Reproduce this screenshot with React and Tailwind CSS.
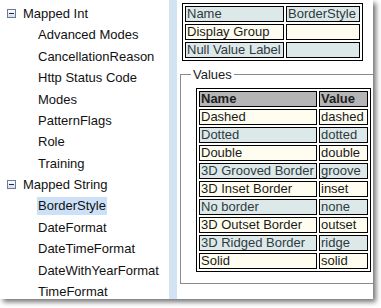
const tree = [
  {
    label: 'Mapped Int',
    items: ['Advanced Modes', 'CancellationReason', 'Http Status Code', 'Modes', 'PatternFlags', 'Role', 'Training'],
  },
  {
    label: 'Mapped String',
    items: ['BorderStyle', 'DateFormat', 'DateTimeFormat', 'DateWithYearFormat', 'TimeFormat'],
  },
];

const values = [
  ['Dashed', 'dashed'],
  ['Dotted', 'dotted'],
  ['Double', 'double'],
  ['3D Grooved Border', 'groove'],
  ['3D Inset Border', 'inset'],
  ['No border', 'none'],
  ['3D Outset Border', 'outset'],
  ['3D Ridged Border', 'ridge'],
  ['Solid', 'solid'],
];

const cream = 'bg-[#fffdf0] text-[#1a1a1a]';
const teal = 'bg-[#dce9e8] text-[#30393f]';

const MinusBox = () => (
  <svg width="9" height="9" viewBox="0 0 9 9" className="shrink-0">
    <defs>
      <linearGradient id="mb" x1="0" y1="0" x2="0" y2="1">
        <stop offset="0" stopColor="#ffffff" />
        <stop offset="1" stopColor="#d6dbe4" />
      </linearGradient>
    </defs>
    <rect x="0.5" y="0.5" width="8" height="8" fill="url(#mb)" stroke="#6a7a96" />
    <rect x="2" y="4" width="5" height="1" fill="#1c2c52" />
  </svg>
);

const Cell = ({ className = '', children }) => (
  <td className={`border border-black px-[1px] py-0 leading-[14px] whitespace-nowrap overflow-hidden ${className}`}>
    {children}
  </td>
);

export default function App() {
  return (
    <div
      className="w-[381px] h-[308px] bg-white overflow-hidden text-[13px]"
      style={{ fontFamily: '"Liberation Sans", Arial, sans-serif' }}
    >
      <div className="w-[373px] h-[299px] bg-white flex shadow-[3px_3px_5px_rgba(0,0,0,0.55)]">
        {/* Tree */}
        <div className="w-[169px] shrink-0 pt-[3px] text-[#111]">
          {tree.map((group) => (
            <div key={group.label}>
              <div className="h-[21.4px] flex items-center gap-[7px] pl-[7px]">
                <MinusBox />
                <span>{group.label}</span>
              </div>
              {group.items.map((item) => (
                <div key={item} className="h-[21.4px] flex items-center">
                  <span
                    className={`ml-[37px] px-[1px] h-[18px] flex items-center ${
                      item === 'BorderStyle' ? 'bg-[#cce1f7]' : ''
                    }`}
                  >
                    {item}
                  </span>
                </div>
              ))}
            </div>
          ))}
        </div>

        {/* Splitter */}
        <div className="w-[8px] shrink-0 bg-[#d2e3f4]" />

        {/* Detail */}
        <div className="flex-1 overflow-hidden pl-[3px] pt-[3px]">
          <table className="ml-[2px] w-[181px] table-fixed border-separate border-spacing-[2px] border border-black">
            <tbody>
              <tr className={teal}>
                <Cell className="w-[99px]">Name</Cell>
                <Cell className="w-[74px]">BorderStyle</Cell>
              </tr>
              <tr className={cream}>
                <Cell>Display Group</Cell>
                <Cell>&nbsp;</Cell>
              </tr>
              <tr className={teal}>
                <Cell>Null Value Label</Cell>
                <Cell>&nbsp;</Cell>
              </tr>
            </tbody>
          </table>

          <fieldset className="mt-[6px] w-[215px] h-[217px] border border-[#8a8a8a] pl-[15px] pt-[6px] m-0">
            <legend className="ml-[-5px] px-[2px] leading-[15px] text-[#1a1a1a]">Values</legend>
            <table className="w-[175px] table-fixed border-separate border-spacing-[2px] border border-black">
              <tbody>
                <tr className="bg-[#b5b5b5] text-[#1e1e1e] font-bold">
                  <Cell className="w-[118px]">Name</Cell>
                  <Cell className="w-[49px]">Value</Cell>
                </tr>
                {values.map(([name, val], i) => (
                  <tr key={val} className={i % 2 === 0 ? cream : teal}>
                    <Cell>{name}</Cell>
                    <Cell>{val}</Cell>
                  </tr>
                ))}
              </tbody>
            </table>
          </fieldset>
        </div>
      </div>
    </div>
  );
}
